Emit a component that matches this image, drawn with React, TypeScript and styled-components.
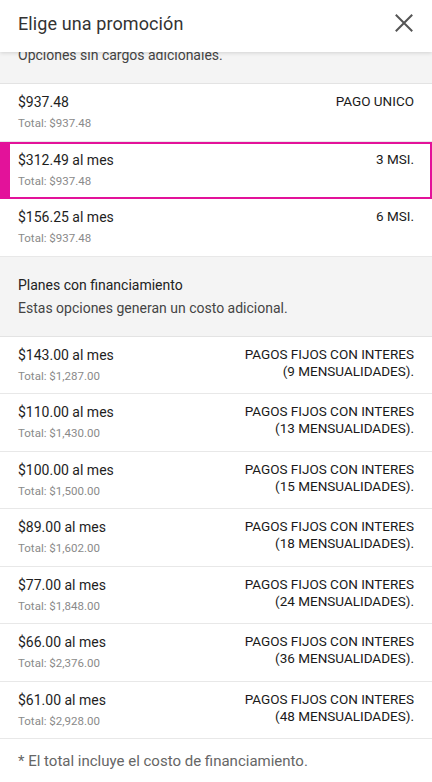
import React from "react";
import styled, { createGlobalStyle } from "styled-components";

interface Plan {
  monthly: string;
  total: string;
  label: string;
  detail?: string;
}

const GlobalStyle = createGlobalStyle`
  html, body {
    margin: 0;
    padding: 0;
    background: #ffffff;
    font-family: Roboto, "Noto Sans", Arial, sans-serif;
    -webkit-font-smoothing: antialiased;
  }
  * {
    box-sizing: border-box;
  }
`;

const Screen = styled.div`
  width: 432px;
  height: 782px;
  display: flex;
  flex-direction: column;
  overflow: hidden;
  background: #ffffff;
`;

const Header = styled.header`
  position: relative;
  z-index: 2;
  flex: 0 0 52px;
  display: flex;
  align-items: center;
  justify-content: space-between;
  padding: 0 18px 6px 18px;
  background: #ffffff;
  box-shadow: 0 1px 4px rgba(0, 0, 0, 0.14);
`;

const Title = styled.h1`
  margin: 0;
  font-size: 18px;
  font-weight: 400;
  color: #333333;
  letter-spacing: 0.1px;
`;

const CloseButton = styled.button`
  display: flex;
  align-items: center;
  justify-content: center;
  width: 24px;
  height: 24px;
  padding: 0;
  margin-right: -2px;
  border: none;
  background: transparent;
  color: #555555;
`;

const ScrollArea = styled.div`
  flex: 1;
  overflow: hidden;
`;

const ScrollContent = styled.div<{ offset: number }>`
  margin-top: ${(props) => -props.offset}px;
`;

const SectionHead = styled.div`
  display: flex;
  flex-direction: column;
  gap: 3px;
  padding: 18px 18px;
  background: #f4f4f4;
  border-bottom: 1.5px solid #e3e3e3;
`;

const SectionTitle = styled.div`
  font-size: 14px;
  line-height: 20px;
  color: #222222;
`;

const SectionText = styled.div`
  font-size: 14px;
  line-height: 20px;
  color: #444444;
`;

const Row = styled.div<{ selected?: boolean }>`
  display: flex;
  justify-content: space-between;
  align-items: flex-start;
  height: 57.5px;
  padding: ${(props) => (props.selected ? "7px 16px 0 8px" : "9px 18px 0 18px")};
  background: #ffffff;
  border-bottom: 1.5px solid #e8e8e8;
  ${(props) =>
    props.selected &&
    `
    border: 2px solid #e3129a;
    border-left-width: 10px;
  `}
`;

const LeftCol = styled.div`
  display: flex;
  flex-direction: column;
  gap: 4px;
`;

const Monthly = styled.div`
  font-size: 14px;
  line-height: 18px;
  color: #1e1e1e;
`;

const Total = styled.div`
  font-size: 11.5px;
  line-height: 16px;
  color: #8a8a8a;
`;

const RightCol = styled.div`
  text-align: right;
  font-size: 13.5px;
  line-height: 17px;
  color: #1a1a1a;
  text-transform: uppercase;
`;

const Footnote = styled.div`
  padding: 12px 18px;
  font-size: 15px;
  line-height: 20px;
  color: #666666;
`;

const freePlans: Plan[] = [
  { monthly: "$937.48", total: "$937.48", label: "PAGO UNICO" },
  { monthly: "$312.49 al mes", total: "$937.48", label: "3 MSI." },
  { monthly: "$156.25 al mes", total: "$937.48", label: "6 MSI." },
];

const financed: Plan[] = [
  { monthly: "$143.00 al mes", total: "$1,287.00", label: "PAGOS FIJOS CON INTERES", detail: "(9 MENSUALIDADES)." },
  { monthly: "$110.00 al mes", total: "$1,430.00", label: "PAGOS FIJOS CON INTERES", detail: "(13 MENSUALIDADES)." },
  { monthly: "$100.00 al mes", total: "$1,500.00", label: "PAGOS FIJOS CON INTERES", detail: "(15 MENSUALIDADES)." },
  { monthly: "$89.00 al mes", total: "$1,602.00", label: "PAGOS FIJOS CON INTERES", detail: "(18 MENSUALIDADES)." },
  { monthly: "$77.00 al mes", total: "$1,848.00", label: "PAGOS FIJOS CON INTERES", detail: "(24 MENSUALIDADES)." },
  { monthly: "$66.00 al mes", total: "$2,376.00", label: "PAGOS FIJOS CON INTERES", detail: "(36 MENSUALIDADES)." },
  { monthly: "$61.00 al mes", total: "$2,928.00", label: "PAGOS FIJOS CON INTERES", detail: "(48 MENSUALIDADES)." },
];

const CloseIcon = () => (
  <svg width="18" height="18" viewBox="0 0 18 18" fill="none">
    <path d="M1.5 1.5L16.5 16.5M16.5 1.5L1.5 16.5" stroke="currentColor" strokeWidth="2" strokeLinecap="square" />
  </svg>
);

const PlanRow = ({ plan, selected }: { plan: Plan; selected?: boolean }) => (
  <Row selected={selected}>
    <LeftCol>
      <Monthly>{plan.monthly}</Monthly>
      <Total>Total: {plan.total}</Total>
    </LeftCol>
    <RightCol>
      {plan.label}
      {plan.detail && (
        <>
          <br />
          {plan.detail}
        </>
      )}
    </RightCol>
  </Row>
);

const App = () => {
  return (
    <>
      <GlobalStyle />
      <Screen>
        <Header>
          <Title>Elige una promoción</Title>
          <CloseButton aria-label="Cerrar">
            <CloseIcon />
          </CloseButton>
        </Header>
        <ScrollArea>
          {/* list is scrolled a little: the first section head sits under the header */}
          <ScrollContent offset={25}>
            <SectionHead>
              <SectionText>Opciones sin cargos adicionales.</SectionText>
            </SectionHead>
            {freePlans.map((plan, i) => (
              <PlanRow key={plan.label} plan={plan} selected={i === 1} />
            ))}
            <SectionHead>
              <SectionTitle>Planes con financiamiento</SectionTitle>
              <SectionText>Estas opciones generan un costo adicional.</SectionText>
            </SectionHead>
            {financed.map((plan) => (
              <PlanRow key={plan.detail} plan={plan} />
            ))}
            <Footnote>* El total incluye el costo de financiamiento.</Footnote>
          </ScrollContent>
        </ScrollArea>
      </Screen>
    </>
  );
};

export default App;
